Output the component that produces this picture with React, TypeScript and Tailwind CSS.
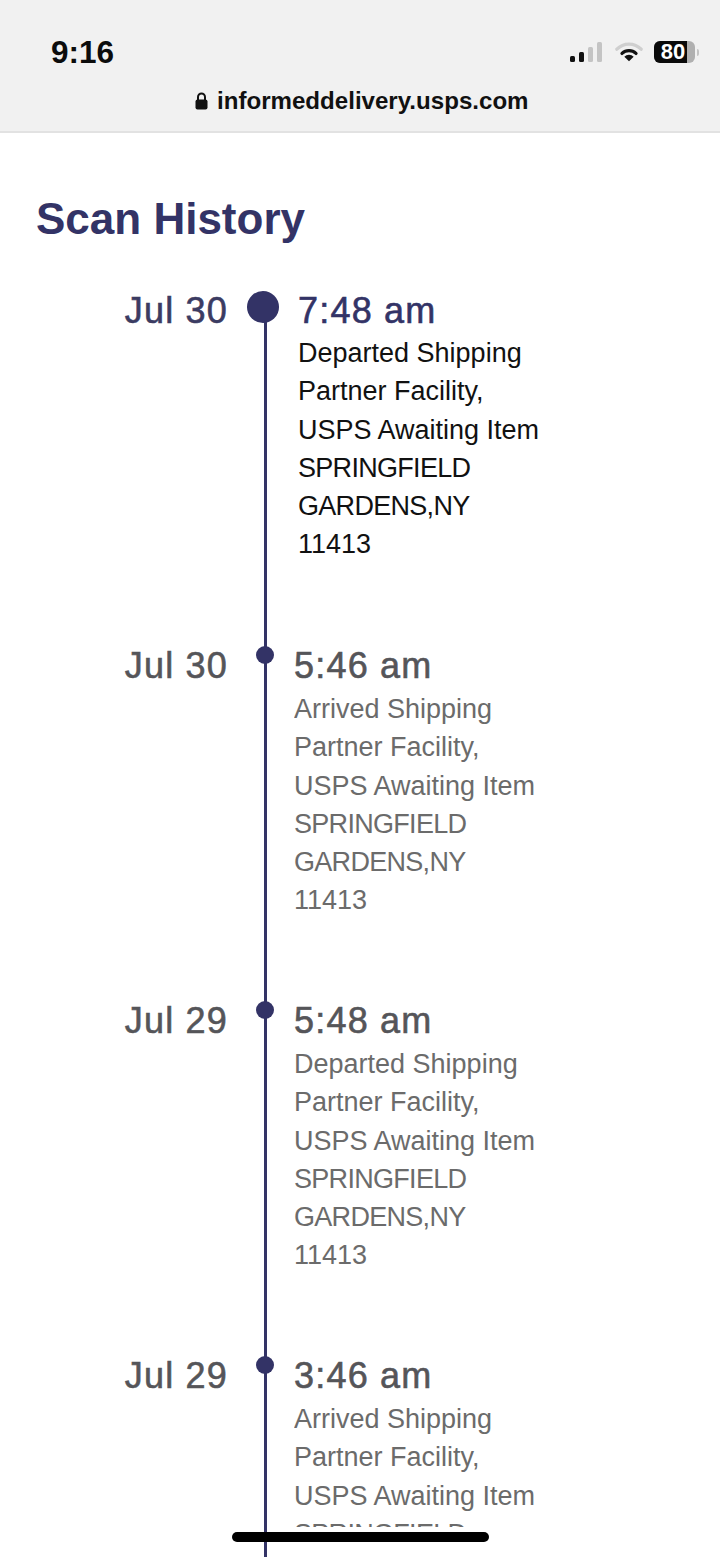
const scans = [
  {
    date: "Jul 30",
    time: "7:48 am",
    lines: ["Departed Shipping", "Partner Facility,", "USPS Awaiting Item", "SPRINGFIELD", "GARDENS,NY", "11413"],
    current: true,
  },
  {
    date: "Jul 30",
    time: "5:46 am",
    lines: ["Arrived Shipping", "Partner Facility,", "USPS Awaiting Item", "SPRINGFIELD", "GARDENS,NY", "11413"],
  },
  {
    date: "Jul 29",
    time: "5:48 am",
    lines: ["Departed Shipping", "Partner Facility,", "USPS Awaiting Item", "SPRINGFIELD", "GARDENS,NY", "11413"],
  },
  {
    date: "Jul 29",
    time: "3:46 am",
    lines: ["Arrived Shipping", "Partner Facility,", "USPS Awaiting Item", "SPRINGFIELD", "GARDENS,NY", "11413"],
  },
];

const StatusIcons = () => (
  <div className="flex items-center">
    <svg width="33" height="22" viewBox="0 0 33 22" className="mt-[2px] mr-[12px]">
      <rect x="0" y="14" width="5" height="6" rx="1.5" fill="#111" />
      <rect x="9" y="10" width="5" height="10" rx="1.5" fill="#111" />
      <rect x="18" y="5" width="5" height="15" rx="1.5" fill="#c4c4c4" />
      <rect x="27" y="0" width="5" height="20" rx="1.5" fill="#c4c4c4" />
    </svg>
    <svg width="28" height="22" viewBox="0 0 30 22" className="mr-[11px]">
      <path d="M2 8 A18 18 0 0 1 28 8" fill="none" stroke="#cfcfcf" strokeWidth="3.5" strokeLinecap="round" />
      <path d="M7.5 12.5 A11 11 0 0 1 22.5 12.5" fill="none" stroke="#111" strokeWidth="3.5" strokeLinecap="round" />
      <path d="M10 16 A7 7 0 0 1 20 16 L15 21 Z" fill="#111" />
    </svg>
    <div className="flex h-[22px] w-[41px] items-center rounded-[6px] bg-[#b0b0b0]">
      <div className="flex h-full w-[33px] items-center justify-center rounded-l-[6px] bg-[#0a0a0a] text-[22px] leading-none font-bold text-white">
        <span className="ml-[5px]">80</span>
      </div>
    </div>
    <div className="ml-[2px] h-[7px] w-[2px] rounded-r-sm bg-[#c4c4c4]" />
  </div>
);

const LockIcon = () => (
  <svg width="13" height="18" viewBox="0 0 13 18" className="mr-[9px]">
    <path d="M3 8 V5 A3.5 3.5 0 0 1 10 5 V8" fill="none" stroke="#111" strokeWidth="2" />
    <rect x="0.5" y="7.5" width="12" height="10" rx="2" fill="#111" />
  </svg>
);

const ScanRow = ({ scan, last }: { scan: (typeof scans)[number]; last: boolean }) => {
  const current = scan.current;
  return (
    <div className="flex h-[355px]">
      <div
        className={`w-[228px] pt-[2px] text-right text-[36px] leading-[36px] tracking-[1.2px] [-webkit-text-stroke:0.6px] ${
          current ? "text-[#3b3b62]" : "text-[#555559]"
        }`}
      >
        {scan.date}
      </div>
      {current ? (
        <div className="z-10 ml-[19px] h-[32px] w-[32px] rounded-full bg-[#333366]" />
      ) : (
        <div className="z-10 ml-[28px] h-[18px] w-[18px] rounded-full bg-[#333366]" />
      )}
      <div className={current ? "ml-[19px]" : "ml-[20px]"}>
        <div
          className={`pt-[2px] text-[36px] leading-[36px] tracking-[1.2px] [-webkit-text-stroke:0.6px] ${
            current ? "text-[#333366]" : "text-[#555559]"
          }`}
        >
          {scan.time}
        </div>
        <div
          className={`overflow-hidden text-[27px] leading-[38.25px] ${
            current ? "mt-[5px] text-[#111]" : "mt-[6px] text-[#6b6b6b]"
          } ${last ? "h-[127px]" : ""}`}
        >
          {scan.lines.map((line) => (
            <div key={line} className={/^[A-Z,]+$/.test(line) ? "tracking-[-0.7px]" : ""}>
              {line}
            </div>
          ))}
        </div>
      </div>
    </div>
  );
};

export default function App() {
  return (
    <div className="relative h-[1557px] w-[720px] overflow-hidden bg-white font-['Liberation_Sans',Arial,sans-serif]">
      <header className="h-[133px] border-b-2 border-[#e2e2e2] bg-[#f1f1f1]">
        <div className="flex items-center justify-between pt-[35px] pr-[21px] pl-[51px]">
          <span className="text-[31.5px] leading-[34px] font-bold text-[#0c0c0c]">9:16</span>
          <StatusIcons />
        </div>
        <div className="mt-[17px] ml-[195px] flex items-center">
          <LockIcon />
          <span className="text-[24.1px] leading-[30px] font-bold text-[#111]">informeddelivery.usps.com</span>
        </div>
      </header>

      <h1 className="mt-[59px] ml-[36px] text-[44px] leading-[54px] font-bold text-[#333366]">
        Scan History
      </h1>

      <div className="relative mt-[45px]">
        <div className="absolute top-[10px] left-[264px] h-[1300px] w-[3px] bg-[#333366]" />
        {scans.map((scan, i) => (
          <ScanRow key={scan.time} scan={scan} last={i === scans.length - 1} />
        ))}
      </div>

      <div className="absolute top-[1532px] left-[232px] h-[10px] w-[257px] rounded-full bg-black" />
    </div>
  );
}
